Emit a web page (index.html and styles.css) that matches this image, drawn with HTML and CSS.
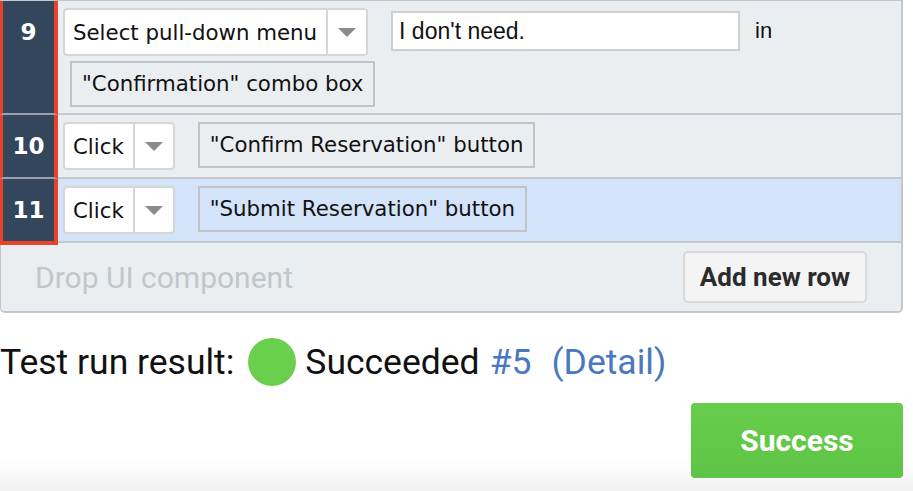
FILE: index.html
```html
<!DOCTYPE html>
<html lang="en">
<head>
    <meta charset="UTF-8">
    <title>Test steps</title>
    <link rel="stylesheet" href="styles.css">
</head>
<body>
    <div class="page">
        <div class="steps">
            <div class="step">
                <div class="num">9</div>
                <div class="body">
                    <div class="line">
                        <div class="select">
                            <span class="select-text">Select pull-down menu</span>
                            <span class="select-arrow"><i></i></span>
                        </div>
                        <div class="value">I don't need.</div>
                        <span class="word">in</span>
                    </div>
                    <div class="line line-indent">
                        <div class="chip">"Confirmation" combo box</div>
                    </div>
                </div>
            </div>
            <div class="step">
                <div class="num">10</div>
                <div class="body">
                    <div class="line">
                        <div class="select">
                            <span class="select-text">Click</span>
                            <span class="select-arrow"><i></i></span>
                        </div>
                        <div class="chip">"Confirm Reservation" button</div>
                    </div>
                </div>
            </div>
            <div class="step step-active">
                <div class="num num-last">11</div>
                <div class="body">
                    <div class="line">
                        <div class="select">
                            <span class="select-text">Click</span>
                            <span class="select-arrow"><i></i></span>
                        </div>
                        <div class="chip">"Submit Reservation" button</div>
                    </div>
                </div>
            </div>
            <div class="drop-row">
                <span class="drop-hint">Drop UI component</span>
                <button class="add-row">Add new row</button>
            </div>
        </div>

        <div class="result">
            <span>Test run result:</span>
            <span class="dot"></span>
            <span>Succeeded</span>
            <a class="link" href="#">#5</a>
            <a class="link link-detail" href="#">(Detail)</a>
        </div>

        <div class="actions">
            <button class="success">Success</button>
        </div>
    </div>
</body>
</html>
```

FILE: styles.css
```css
body {
    margin: 0;
    font-family: "DejaVu Sans", sans-serif;
    color: #111;
    height: 491px;
    overflow: hidden;
    background: linear-gradient(#fff 0, #fff 460px, #f1f1f1 491px);
}
.page {
    width: 903px;
}
.steps {
    background-color: #ebeef0;
    border: 2px solid #c3c7cb;
    border-top-width: 1px;
    border-left-width: 1px;
    border-radius: 0 0 5px 5px;
}
.step {
    display: flex;
    border-bottom: 2px solid #c5c9cd;
}
.step-active {
    background-color: #d3e3fa;
}
.num {
    width: 51px;
    flex-shrink: 0;
    margin-left: -1px;
    margin-bottom: -2px;
    background-color: #34465c;
    border-left: 3px solid #e8432a;
    border-right: 4px solid #e8432a;
    border-bottom: 2px solid #9aa3ad;
    color: #fff;
    font-weight: bold;
    font-size: 23px;
    text-align: center;
    line-height: 48px;
    padding-top: 7px;
}
.num-last {
    border-bottom: 4px solid #e8432a;
    margin-bottom: -4px;
}
.body {
    padding: 7px 0 7px 5px;
}
.line {
    display: flex;
    align-items: center;
}
.line-indent {
    padding: 5px 0 0 7px;
    margin-bottom: -1px;
}
.select {
    display: flex;
    height: 44px;
    background: #fff;
    border: 2px solid #d6d6d6;
    border-radius: 4px;
    font-size: 21.3px;
}
.select-text {
    padding: 0 9px 0 8px;
    line-height: 46px;
}
.select-arrow {
    width: 38px;
    border-left: 2px solid #d6d6d6;
    display: flex;
    align-items: center;
    justify-content: center;
}
.select-arrow i {
    width: 0;
    height: 0;
    border-left: 9px solid transparent;
    border-right: 9px solid transparent;
    border-top: 9px solid #8b8b8b;
}
.value {
    margin-left: 23px;
    width: 333px;
    height: 36px;
    line-height: 36px;
    padding: 0 6px;
    background: #fff;
    border: 2px solid #cfcfcf;
    font-family: "Liberation Sans", Arial, sans-serif;
    font-size: 23px;
    margin-top: -2px;
}
.word {
    margin-left: 15px;
    font-family: "Liberation Sans", Arial, sans-serif;
    font-size: 22px;
    margin-top: -2px;
}
.chip {
    margin-left: 23px;
    border: 2px solid #c1c3c5;
    padding: 0 10px;
    height: 42px;
    line-height: 42px;
    font-size: 21.3px;
    margin-top: -3px;
}
.line-indent .chip {
    margin-left: 0;
    margin-top: 0;
    height: 42px;
}
.drop-row {
    display: flex;
    align-items: center;
    justify-content: space-between;
    height: 68px;
    padding: 0 34px 0 34px;
    font-family: Roboto, sans-serif;
}
.drop-hint {
    color: #c2c6c9;
    font-size: 30px;
}
.add-row {
    font-family: Roboto, sans-serif;
    font-weight: bold;
    font-size: 26px;
    color: #2b2b2b;
    background: #f4f4f4;
    border: 2px solid #d9d9d9;
    border-radius: 5px;
    width: 184px;
    height: 52px;
}
.result {
    display: flex;
    align-items: center;
    margin-top: 25px;
    height: 48px;
    font-family: Roboto, sans-serif;
    font-size: 35.5px;
    color: #111;
}
.dot {
    width: 48px;
    height: 48px;
    border-radius: 50%;
    background-color: #69cf4d;
    margin: 0 9px 0 14px;
}
.link {
    color: #4a78c0;
    text-decoration: none;
    margin-left: 10px;
}
.link-detail {
    margin-left: 20px;
}
.actions {
    display: flex;
    justify-content: flex-end;
    margin-top: 17px;
}
.success {
    width: 212px;
    height: 75px;
    border: none;
    border-radius: 4px;
    background: linear-gradient(#67cd4c, #5ec445);
    color: #fff;
    font-family: Roboto, sans-serif;
    font-weight: bold;
    font-size: 30px;
}
```
